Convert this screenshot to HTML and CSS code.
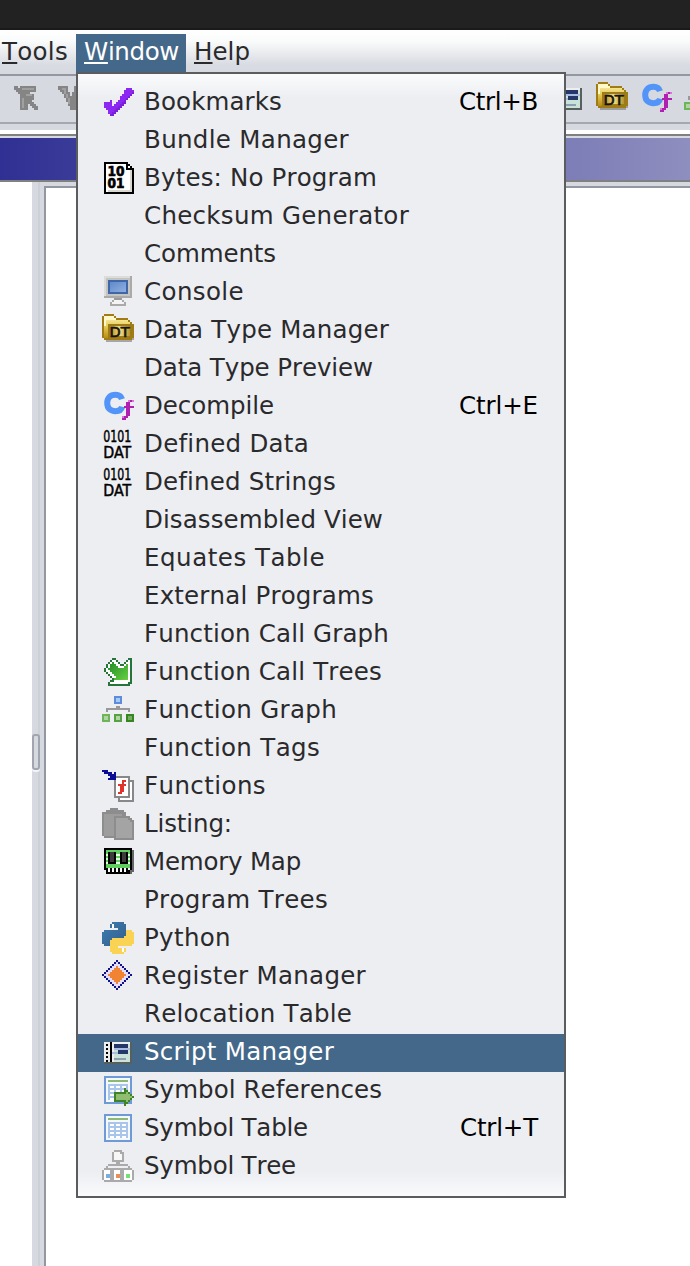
FILE: index.html
```html
<!DOCTYPE html>
<html lang="en">
<head>
<meta charset="utf-8">
<title>Window menu</title>
<link rel="stylesheet" href="styles.css">
</head>
<body>
<svg class="defs" width="0" height="0">
  <defs>
    <linearGradient id="gold" x1="0" y1="0" x2="0" y2="1"><stop offset="0" stop-color="#fbf3bd"/><stop offset=".45" stop-color="#e8cd55"/><stop offset="1" stop-color="#b88c18"/></linearGradient>
    <linearGradient id="label" x1="0" y1="0" x2="1" y2="0"><stop offset="0" stop-color="#b08d20"/><stop offset=".5" stop-color="#f0dc88"/><stop offset="1" stop-color="#b8932a"/></linearGradient>
    <linearGradient id="screen" x1="0" y1="0" x2="1" y2="1"><stop offset="0" stop-color="#5f8acb"/><stop offset="1" stop-color="#90afe0"/></linearGradient>
    <linearGradient id="leaf" x1="0" y1="0" x2="1" y2="1"><stop offset="0" stop-color="#1f8a2a"/><stop offset="1" stop-color="#68d040"/></linearGradient>
    <linearGradient id="pyblue" x1="0" y1="0" x2="1" y2="1"><stop offset="0" stop-color="#3f7cae"/><stop offset="1" stop-color="#315f8e"/></linearGradient>
  </defs>
  <symbol id="check" viewBox="0 0 16 16">
    <path fill="#8d27f2" d="M1 9V8H4V7H5V10H6V9H7V8H8V7H9V5H10V4H11V2H12V1H15V2H16V4H15V5H14V6H13V7H12V9H11V10H10V11H9V12H8V13H7V14H6V15H4V14H3V12H2V11H1z"/>
    <path fill="#7a20dc" d="M15 3h1v1h-1v1h-1v1h-1v1h-1v2h-1v1h-1v1H9v1H8v1H7v1H6v1H4v-1h1v-1h1v-1h1v-1h1v-1h1V9h1V8h1V7h1V6h1V5h1V4h1z"/>
  </symbol>
  <symbol id="bytes" viewBox="0 0 16 16">
    <path d="M1 0h12v1h1v1h1v1h1v13H1z"/><path fill="#fff" d="M2 1h10v3h3v11H2z"/><path fill="#fff" d="M13 2h1v1h-1z"/><path fill="#d9d9d0" d="M14 4h1v11H3v-1h11z"/>
  </symbol>
  <symbol id="console" viewBox="0 0 16 16">
    <path fill="#aaaaa8" d="M1 0h14v11H1z"/><path fill="#dcdcda" d="M1 0h13v10H1z"/><path fill="#c4c4c2" d="M2 1h12v9H2z"/><path fill="#3f67a8" d="M3 2h10v7H3z"/><path fill="url(#screen)" d="M4 3h8v5H4z"/><path fill="#999" d="M6 11h4v1H6z"/><path fill="#aaa" d="M5 12h6v1h1v2H4v-2h1z"/><path fill="#f4f4f4" d="M6 12h4v1h1v1H5v-1h1z"/>
  </symbol>
  <symbol id="dt" viewBox="0 0 16 16">
    <path fill="#777" opacity=".6" d="M2 13h14V5h-1v9H2z"/>
    <path fill="#a17c14" d="M0 1h1V0h5v1h1v1h6v1h1v1h1v1h1v7h-1v1H1v-1H0z"/><path fill="url(#gold)" d="M1 1h5v1h1v1h6v1h1v8H1z"/><path fill="#fff8ca" d="M1 1h5v1h1v1H2v3H1z"/><path fill="#9c7b18" d="M3 5h12v7H3z"/><path fill="url(#label)" d="M4 6h10v5H4z"/>
  </symbol>
  <symbol id="cf" viewBox="0 0 16 16">
    <path fill="none" stroke="#5294f8" stroke-width="3" shape-rendering="auto" d="M10 4.600C9.500 2.900 8.400 2.400 6.800 2.400 4 2.400 2.600 4 2.600 6.500s1.400 4.100 4.200 4.100c1.600 0 2.900-.6 3.300-2.200"/>
    <path fill="#b020b0" d="M13 5h3v1h-2v2h2v1h-2v4h-1v1h-1v1h-2v-1h1v-1h1V9h-1V8h1V6h1z"/><path fill="#e070df" d="M13 5h1v1h-1zM10 13h1v1h-1zM15 5h1v1h-1z"/>
  </symbol>
  <symbol id="trees" viewBox="0 0 16 16">
    <path fill="#26743a" d="M5 1h2v1h1v1h1v1h2V3h1V2h1V1h2v13h-1v1H3v-2h1v-1h1v-1H4v-1H3V9H2V8H1V6h1V4h1V3h1V2h1z"/>
    <path fill="#fff" d="M5 2h2v1h1v1h1v1h2V4h1V3h1V2h1v11h-1v1H4v-1h2v-2H5v-1H4V9H3V8H2V6h1V4h1V3h1z"/>
    <path fill="url(#leaf)" d="M5 3h1v1h1v1h1v1h3V5h1V4h1v8H6v-1h1v-1H6V9H5V8H4V7H3V6h1V4h1z"/>
  </symbol>
  <symbol id="graph" viewBox="0 0 16 16">
    <path fill="#5d8cd8" d="M6 1h4v4H6z"/><path fill="#a7c8f8" d="M7 2h2v2H7z"/><path fill="#999" d="M7 6h2v1h5v2h-1V8H3v1H2V7h5z"/>
    <path fill="#6eb458" d="M0 10h4v4H0z"/><path fill="#58a142" d="M6 10h4v4H6z"/><path fill="#38841f" d="M12 10h4v4h-4z"/><path fill="#afd5a4" d="M1 11h2v2H1zM7 11h2v2H7z"/><path fill="#74ae63" d="M13 11h2v2h-2z"/>
  </symbol>
  <symbol id="functions" viewBox="0 0 16 16">
    <path fill="#888" d="M8 5h8v11H8z"/><path fill="#fff" d="M9 6h6v9H9z"/><path fill="#888" d="M6 3h8v11H6z"/><path fill="#fff" d="M7 4h6v9H7z"/>
    <path fill="#e0342a" d="M10 5h2v1h-1v1h1v1h-1v3h-1v1H8v-1h1V8H8V7h2z"/>
    <path fill="#0a0c98" d="M0 0h3v1h2v1h1V1h1v4H3V4h1V3H3V2H1V1H0z"/>
  </symbol>
  <symbol id="listing" viewBox="0 0 16 16">
    <path fill="#8d8d8d" d="M0 2h2V1h2V0h4v1h3v1h1v2h2v1h1v1h1v10H6v-1H1v-1H0z"/><path fill="#9d9d9d" d="M1 3h9v1H6v10H1z"/><path fill="#a4a4a4" d="M7 5h6v1h1v1h1v8H7z"/>
  </symbol>
  <symbol id="memory" viewBox="0 0 16 16">
    <path fill="#666" d="M2 2h14v11h-1v1H2z"/><path d="M1 1h14v11h-1v2H2v-2H1z"/><path fill="#5fd05f" d="M2 2h12v9H2z"/><path fill="#e0ffe0" d="M2 4h12v1H2zM2 6h12v1H2zM2 8h12v1H2z"/><path d="M3 3h4v6H3zM9 3h4v6H9z"/><path fill="#3c3c3c" d="M4 3h2v5H4zM10 3h2v5h-2z"/><path fill="#fff" d="M3 11h1v2H3zM5 11h1v2H5zM7 11h1v2H7zM9 11h1v2H9zM11 11h1v2h-1zM13 11h1v1h-1z"/>
  </symbol>
  <symbol id="python" viewBox="0 0 16 16">
    <path fill="url(#pyblue)" d="M5 0h6v1h1v6h-1v1H5v1H4v3H1v-1H0V5h1V4h7V3H4V1h1z"/><path fill="#fad355" d="M12 4h3v1h1v6h-1v1H8v1h4v2h-1v1H5v-1H4V9h1V8h6V7h1z"/><path fill="#fff" d="M5 1h1v2H5zM10 13h1v2h-1z"/>
  </symbol>
  <symbol id="register" viewBox="0 0 16 16">
    <path fill="#11118c" d="M7 0h1v1h1v1h1v1h1v1h1v1h1v1h1v1h1v1h-1v1h-1v1h-1v1h-1v1h-1v1H9v1H8v1H7v-1H6v-1H5v-1H4v-1H3v-1H2V9H1V8H0V7h1V6h1V5h1V4h1V3h1V2h1V1h1z"/>
    <path fill="#e3deff" d="M7 1h1v1h1v1h1v1h1v1h1v1h1v1h1v1h-1v1h-1v1h-1v1h-1v1H9v1H8v1H7v-1H6v-1H5v-1H4v-1H3V9H2V8H1V7h1V6h1V5h1V4h1V3h1V2h1z"/>
    <path fill="#f18432" d="M7 3h1v1h1v1h1v1h1v1h1v1h-1v1h-1v1H9v1H8v1H7v-1H6v-1H5V9H4V8H3V7h1V6h1V5h1V4h1z"/>
  </symbol>
  <symbol id="script" viewBox="0 0 16 16">
    <path fill="#57605c" d="M1 3h14v11H1z"/><path fill="#eee" d="M1 3h13v10H1z"/><path d="M2 4h1v1H2zM2 6h1v1H2zM2 8h1v1H2zM2 10h1v1H2zM2 12h1v1H2zM4 3h1v10H4z"/><path fill="#c9e3d9" d="M6 4h8v9H6z"/><path fill="#253769" d="M6 4h7v2H6zM8 7h5v2H8z"/><path fill="#a9bce2" d="M6 6h8v1H6zM5 8h3v1H5z"/><path fill="#8c9fb3" d="M6 11h6v1H6z"/>
  </symbol>
  <symbol id="table" viewBox="0 0 16 16">
    <path fill="#6e9bd8" d="M1 1h14v14H1z"/><path fill="#f5f8ff" d="M2 2h12v12H2z"/><path fill="#8cba72" d="M3 3h10v1H3z"/><path fill="#a9c5ea" d="M3 5h10v8H3z"/><path fill="#fff" d="M4 6h2v1H4zM7 6h2v1H7zM10 6h2v1h-2zM4 8h2v1H4zM7 8h2v1H7zM10 8h2v1h-2zM4 10h2v1H4zM7 10h2v1H7zM10 10h2v1h-2zM4 12h2v1H4zM7 12h2v1H7zM10 12h2v1h-2z"/>
  </symbol>
  <symbol id="refs" viewBox="0 0 16 16">
    <use href="#table" width="16" height="16"/>
    <path fill="#3c8426" d="M6 9h5V7h1v1h1v1h1v1h1v1h1v1h-1v1h-1v1h-1v1h-1v1h-1v-2H6z"/><path fill="#8fbe70" d="M7 10h5V9h1v1h1v1h1v1h-1v1h-1v1h-1v-1H7z"/>
  </symbol>
  <symbol id="tree" viewBox="0 0 16 16">
    <path fill="#aaa" d="M5 1h1V0h4v1h1v5H9v1h4v1h1v1h1v1h1v5h-1v1H1v-1H0v-5h1V9h1V8h1V7h4V6H5z"/><path fill="#f7f7f7" d="M6 1h3v1h1v3H6z"/><path fill="#eeeff3" d="M3 8h10v1H3z"/><path fill="#fff" d="M1 10h3v5H1zM6 10h3v5H6zM11 10h4v5h-4z"/><path fill="#76aee6" d="M2 12h2v2H2z"/><path fill="#eb8d58" d="M7 12h2v2H7z"/><path fill="#77dd77" d="M12 12h2v2h-2z"/>
  </symbol>
  <symbol id="no-f" viewBox="0 0 16 16">
    <path fill="#858585" d="M1 2h2v1h1V2h8v3H9v1h2v3h-1v1h1v1h1v1h1v2h-2v-1h-1v-1H9v-1H8v3H4V6H3V5H2V4H1z"/><path fill="#a0a0a0" d="M5 3h6v1H5zM5 8h1v5H5zM7 6h3v1H7z"/>
  </symbol>
  <symbol id="no-v" viewBox="0 0 16 16">
    <path fill="#858585" d="M1 2h5v3h1v2h1V5h1V2h4v3h-1v3h-1v3h1v1h1v2h-2v-1h-1v1H7v-2H6v-2H5V8H4V6H3V5H2V4H1z"/><path fill="#a0a0a0" d="M3 3h2v3h1v2h1v3H6V8H5V6H4V4H3z"/>
  </symbol>
</svg>

<div class="app">
  <div class="strip"></div>
  <nav class="menubar">
    <div class="menu-title tools"><span data-width="66"><u>T</u>ools</span></div>
    <div class="menu-title window"><span data-width="95"><u>W</u>indow</span></div>
    <div class="menu-title help"><span data-width="56"><u>H</u>elp</span></div>
  </nav>
  <div class="toolbar">
    <svg class="icon"><use href="#no-f"/></svg>
    <svg class="icon"><use href="#no-v"/></svg>
    <svg class="icon right"><use href="#script"/></svg>
    <svg class="icon" viewBox="0 0 16 16"><use href="#dt"/><text x="3.800" y="11.300" class="g-dt" textLength="10" lengthAdjust="spacingAndGlyphs">DT</text></svg>
    <svg class="icon"><use href="#cf"/></svg>
    <svg class="icon"><use href="#graph"/></svg>
  </div>
  <div class="toolbar-foot"></div>
  <div class="gap"></div>
  <div class="titlebar"></div>
  <main class="panes">
    <div class="left"></div>
    <div class="divider"><div class="grip"></div></div>
    <div class="content"></div>
  </main>

  <ul class="popup">
    <li><svg class="icon"><use href="#check"/></svg><span data-width="138">Bookmarks</span><kbd data-width="79">Ctrl+B</kbd></li>
    <li><i class="icon"></i><span data-width="205">Bundle Manager</span></li>
    <li><svg class="icon" viewBox="0 0 16 16"><use href="#bytes"/><text x="2.800" y="7" class="g-bits" textLength="8.500" lengthAdjust="spacingAndGlyphs">10</text><text x="2.800" y="13" class="g-bits" textLength="8.500" lengthAdjust="spacingAndGlyphs">01</text></svg><span data-width="233">Bytes: No Program</span></li>
    <li><i class="icon"></i><span data-width="265">Checksum Generator</span></li>
    <li><i class="icon"></i><span data-width="132">Comments</span></li>
    <li><svg class="icon"><use href="#console"/></svg><span data-width="100">Console</span></li>
    <li><svg class="icon" viewBox="0 0 16 16"><use href="#dt"/><text x="3.800" y="11.300" class="g-dt" textLength="10" lengthAdjust="spacingAndGlyphs">DT</text></svg><span data-width="245">Data Type Manager</span></li>
    <li><i class="icon"></i><span data-width="229">Data Type Preview</span></li>
    <li><svg class="icon"><use href="#cf"/></svg><span data-width="130">Decompile</span><kbd data-width="79">Ctrl+E</kbd></li>
    <li><svg class="icon" viewBox="0 0 16 16"><text x=".6" y="7" class="g-dat" textLength="14" lengthAdjust="spacingAndGlyphs">0101</text><text x=".6" y="15" class="g-dat" textLength="14" lengthAdjust="spacingAndGlyphs">DAT</text></svg><span data-width="165">Defined Data</span></li>
    <li><svg class="icon" viewBox="0 0 16 16"><text x=".6" y="7" class="g-dat" textLength="14" lengthAdjust="spacingAndGlyphs">0101</text><text x=".6" y="15" class="g-dat" textLength="14" lengthAdjust="spacingAndGlyphs">DAT</text></svg><span data-width="192">Defined Strings</span></li>
    <li><i class="icon"></i><span data-width="239">Disassembled View</span></li>
    <li><i class="icon"></i><span data-width="181">Equates Table</span></li>
    <li><i class="icon"></i><span data-width="230">External Programs</span></li>
    <li><i class="icon"></i><span data-width="245">Function Call Graph</span></li>
    <li><svg class="icon"><use href="#trees"/></svg><span data-width="238">Function Call Trees</span></li>
    <li><svg class="icon"><use href="#graph"/></svg><span data-width="193">Function Graph</span></li>
    <li><i class="icon"></i><span data-width="176">Function Tags</span></li>
    <li><svg class="icon"><use href="#functions"/></svg><span data-width="122">Functions</span></li>
    <li><svg class="icon"><use href="#listing"/></svg><span data-width="88">Listing:</span></li>
    <li><svg class="icon"><use href="#memory"/></svg><span data-width="157">Memory Map</span></li>
    <li><i class="icon"></i><span data-width="184">Program Trees</span></li>
    <li><svg class="icon"><use href="#python"/></svg><span data-width="87">Python</span></li>
    <li><svg class="icon"><use href="#register"/></svg><span data-width="222">Register Manager</span></li>
    <li><i class="icon"></i><span data-width="208">Relocation Table</span></li>
    <li class="selected"><svg class="icon"><use href="#script"/></svg><span data-width="190">Script Manager</span></li>
    <li><svg class="icon"><use href="#refs"/></svg><span data-width="238">Symbol References</span></li>
    <li><svg class="icon"><use href="#table"/></svg><span data-width="164">Symbol Table</span><kbd data-width="78">Ctrl+T</kbd></li>
    <li><svg class="icon"><use href="#tree"/></svg><span data-width="152">Symbol Tree</span></li>
  </ul>
</div>
<script src="labels.js"></script>
</body>
</html>
```
FILE: labels.js
```js
// Spread each label's letters evenly over its measured width.
document.querySelectorAll('[data-width]').forEach(function (label) {
  var natural = label.getBoundingClientRect().width;
  var spare = Number(label.dataset.width) - natural;
  label.style.letterSpacing = (spare / label.textContent.length).toFixed(3) + 'px';
});
```
FILE: styles.css
```css
* { box-sizing: border-box; }
body { margin: 0; font-family: "DejaVu Sans", sans-serif; font-size: 24.5px; font-kerning: none; font-variant-ligatures: none; color: #2a2a2c; }
.defs { position: absolute; }
.app { position: relative; width: 690px; height: 1266px; overflow: hidden; display: flex; flex-direction: column; background: #fff; }
.strip { height: 30px; background: #222; border-bottom: 2px solid #1a1a1a; flex: none; }

.menubar { flex: none; height: 46px; display: flex; padding-top: 4px; border-bottom: 2px solid #9297a1; background: linear-gradient(#fff 0, #fafbfb 25%, #d8dbe1 80%, #d6d9df); }
.menu-title { height: 38px; line-height: 36px; white-space: nowrap; }
.menu-title u { text-decoration: underline; text-decoration-thickness: 2px; text-underline-offset: 2px; text-decoration-skip-ink: none; }
.tools { width: 76px; padding-left: 2px; }
.window { width: 110px; padding-left: 8px; background: #446889; color: #fff; }
.help { padding-left: 8px; }

.toolbar { flex: none; height: 48px; display: flex; gap: 12px; padding: 6px 0 0 12px; background: #d6d9df; border-bottom: 2px solid #a5a8af; overflow: hidden; }
.toolbar .right { margin-left: 452px; }
.toolbar-foot { flex: none; height: 6px; background: #d6d9df; }
.gap { flex: none; height: 4px; }
.titlebar { flex: none; height: 48px; border-top: 2px solid #808080; border-bottom: 2px solid #808080; background: linear-gradient(#d6d9df, #d6d9df) top / 100% 2px no-repeat, linear-gradient(90deg, #303094, #8e8ebf); }

.panes { flex: 1; display: flex; }
.left { width: 32px; }
.divider { width: 12px; padding-top: 552px; background: linear-gradient(90deg, #d6d9df 6px, #cdd0d7 6px, #cdd0d7 8px, #d6d9df 8px); }
.grip { width: 8px; height: 36px; border: 2px solid #a1a5af; border-radius: 3px; background: #d6d9df; box-shadow: 0 2px #f5f5f7; }
.content { flex: 1; border-top: 4px solid #d6d9df; box-shadow: inset 2px 2px #9297a1; }

.popup { position: absolute; left: 76px; top: 72px; width: 490px; height: 1126px; margin: 0; padding: 10px 0; list-style: none; border: 2px solid #5b5c5e; background: linear-gradient(#fafbfc 0, #edeef2 24px, #edeef2 calc(100% - 24px), #fafbfc 100%); }
.popup li { height: 38px; display: flex; align-items: flex-start; padding: 2px 26px 0 24px; line-height: 31px; white-space: nowrap; }
.popup span { margin-left: 10px; }
.popup kbd { margin-left: auto; font: inherit; font-kerning: none; color: #000; }
.popup .selected { background: #446889; color: #fff; }

.icon { width: 32px; height: 32px; flex: none; shape-rendering: crispEdges; }
.g-bits { font: bold 7px "DejaVu Sans", sans-serif; fill: #000; stroke: #000; stroke-width: .35px; }
.g-dt { font: 7px "DejaVu Sans", sans-serif; fill: #17130a; stroke: #17130a; stroke-width: .35px; }
.g-dat { font: 8px "DejaVu Sans", sans-serif; fill: #000; stroke: #000; stroke-width: .25px; }
```
